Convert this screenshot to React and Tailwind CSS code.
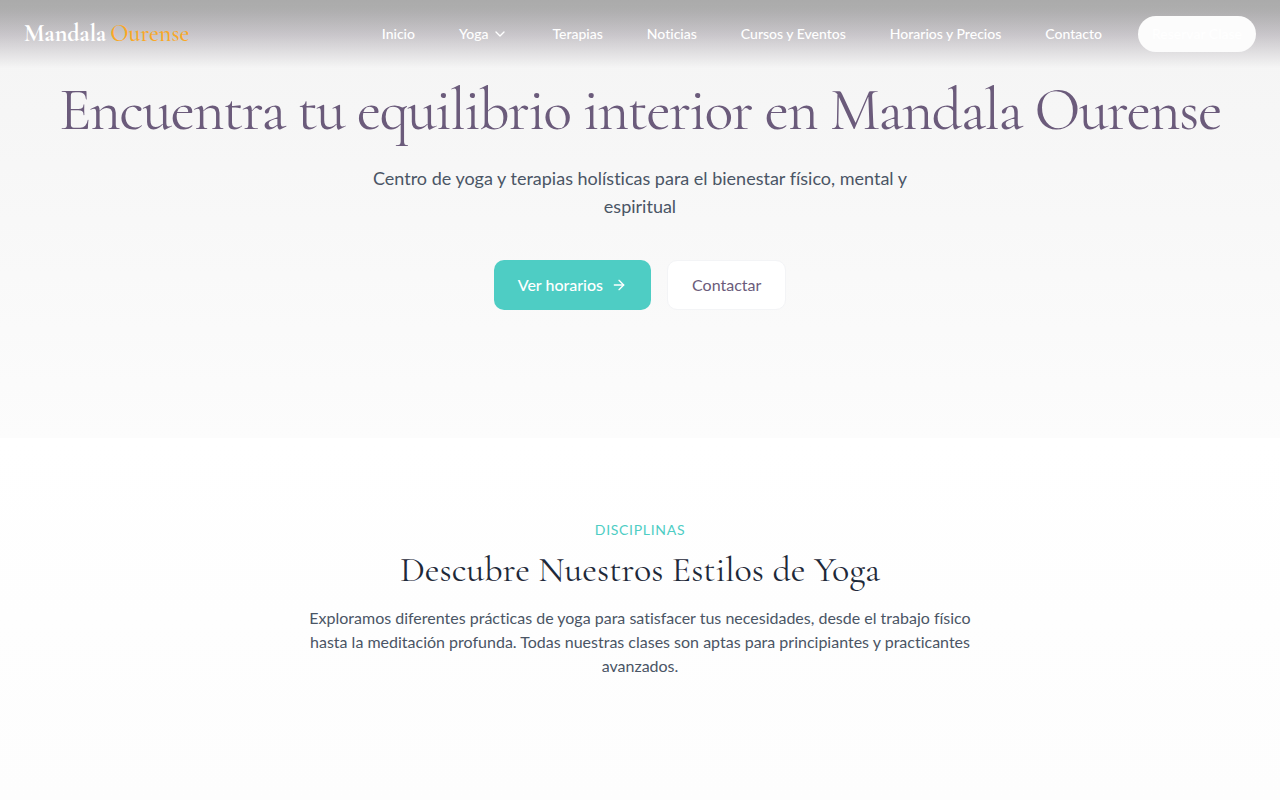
import { ArrowRight, ChevronDown } from "lucide-react";

const links = [
  { label: "Inicio", href: "#inicio" },
  { label: "Yoga", href: "#yoga", menu: true },
  { label: "Terapias", href: "#terapias" },
  { label: "Noticias", href: "#noticias" },
  { label: "Cursos y Eventos", href: "#cursos" },
  { label: "Horarios y Precios", href: "#horarios" },
  { label: "Contacto", href: "#contacto" },
];

function Header() {
  return (
    <header className="absolute inset-x-0 top-0 z-10 flex items-center justify-between bg-linear-to-b from-black/30 via-[#4f4454]/27 to-transparent px-6 py-4">
      <a
        href="#inicio"
        className="flex gap-1 font-['Cormorant_Garamond','Liberation_Serif',serif] text-2xl font-medium whitespace-nowrap text-[#f9a826]"
      >
        <span className="font-bold text-white">Mandala</span>
        <span>Ourense</span>
      </a>
      <div className="flex items-center gap-5">
        <nav className="flex items-center gap-3">
          {links.map(({ label, href, menu }) =>
            menu ? (
              <button
                key={label}
                type="button"
                className="flex items-center gap-1 px-4 text-sm font-medium whitespace-nowrap text-white"
              >
                {label}
                <ChevronDown size={16} aria-hidden="true" />
              </button>
            ) : (
              <a
                key={label}
                href={href}
                className="px-4 text-sm font-medium whitespace-nowrap text-white"
              >
                {label}
              </a>
            ),
          )}
        </nav>
        <button
          type="button"
          className="rounded-full bg-[#fcfcfc] px-3.5 py-2 text-sm font-medium whitespace-nowrap text-white"
        >
          Reservar Clase
        </button>
      </div>
    </header>
  );
}

function Hero() {
  return (
    <section
      id="inicio"
      className="flex flex-col items-center bg-linear-to-b from-[#f4f4f4] to-[#fcfcfc] px-6 pt-20 pb-32 text-center"
    >
      <h1 className="font-['Cormorant_Garamond','Liberation_Serif',serif] text-6xl leading-[60px] tracking-tight text-[#6b5b7b]">
        Encuentra tu equilibrio interior en Mandala Ourense
      </h1>
      <p className="mt-6 max-w-xl text-lg leading-7 text-gray-600">
        Centro de yoga y terapias holísticas para el bienestar físico, mental y
        espiritual
      </p>
      <div className="mt-10 flex gap-4">
        <a
          href="#horarios"
          className="flex items-center gap-2 rounded-[10px] bg-[#4ecdc4] px-6 py-3 font-medium text-white"
        >
          Ver horarios
          <ArrowRight size={16} aria-hidden="true" />
        </a>
        <a
          href="#contacto"
          className="flex items-center rounded-[10px] border border-gray-100 bg-white px-6 py-3 text-[#6b5b7b]"
        >
          Contactar
        </a>
      </div>
    </section>
  );
}

function Styles() {
  return (
    <section
      id="yoga"
      className="flex grow flex-col items-center bg-linear-to-b from-white to-[#fdfdfd] px-6 py-20 text-center"
    >
      <p className="text-sm leading-6 tracking-wider text-[#4ecdc4] uppercase">
        Disciplinas
      </p>
      <h2 className="mt-2 font-['Cormorant_Garamond','Liberation_Serif',serif] text-4xl text-gray-800">
        Descubre Nuestros Estilos de Yoga
      </h2>
      <p className="mt-4 max-w-2xl text-gray-600">
        Exploramos diferentes prácticas de yoga para satisfacer tus necesidades,
        desde el trabajo físico hasta la meditación profunda. Todas nuestras
        clases son aptas para principiantes y practicantes avanzados.
      </p>
    </section>
  );
}

export default function App() {
  return (
    <div className="relative flex min-h-screen flex-col bg-white font-['Lato',sans-serif] [font-variant-ligatures:none]">
      <Header />
      <main className="flex grow flex-col">
        <Hero />
        <Styles />
      </main>
    </div>
  );
}
